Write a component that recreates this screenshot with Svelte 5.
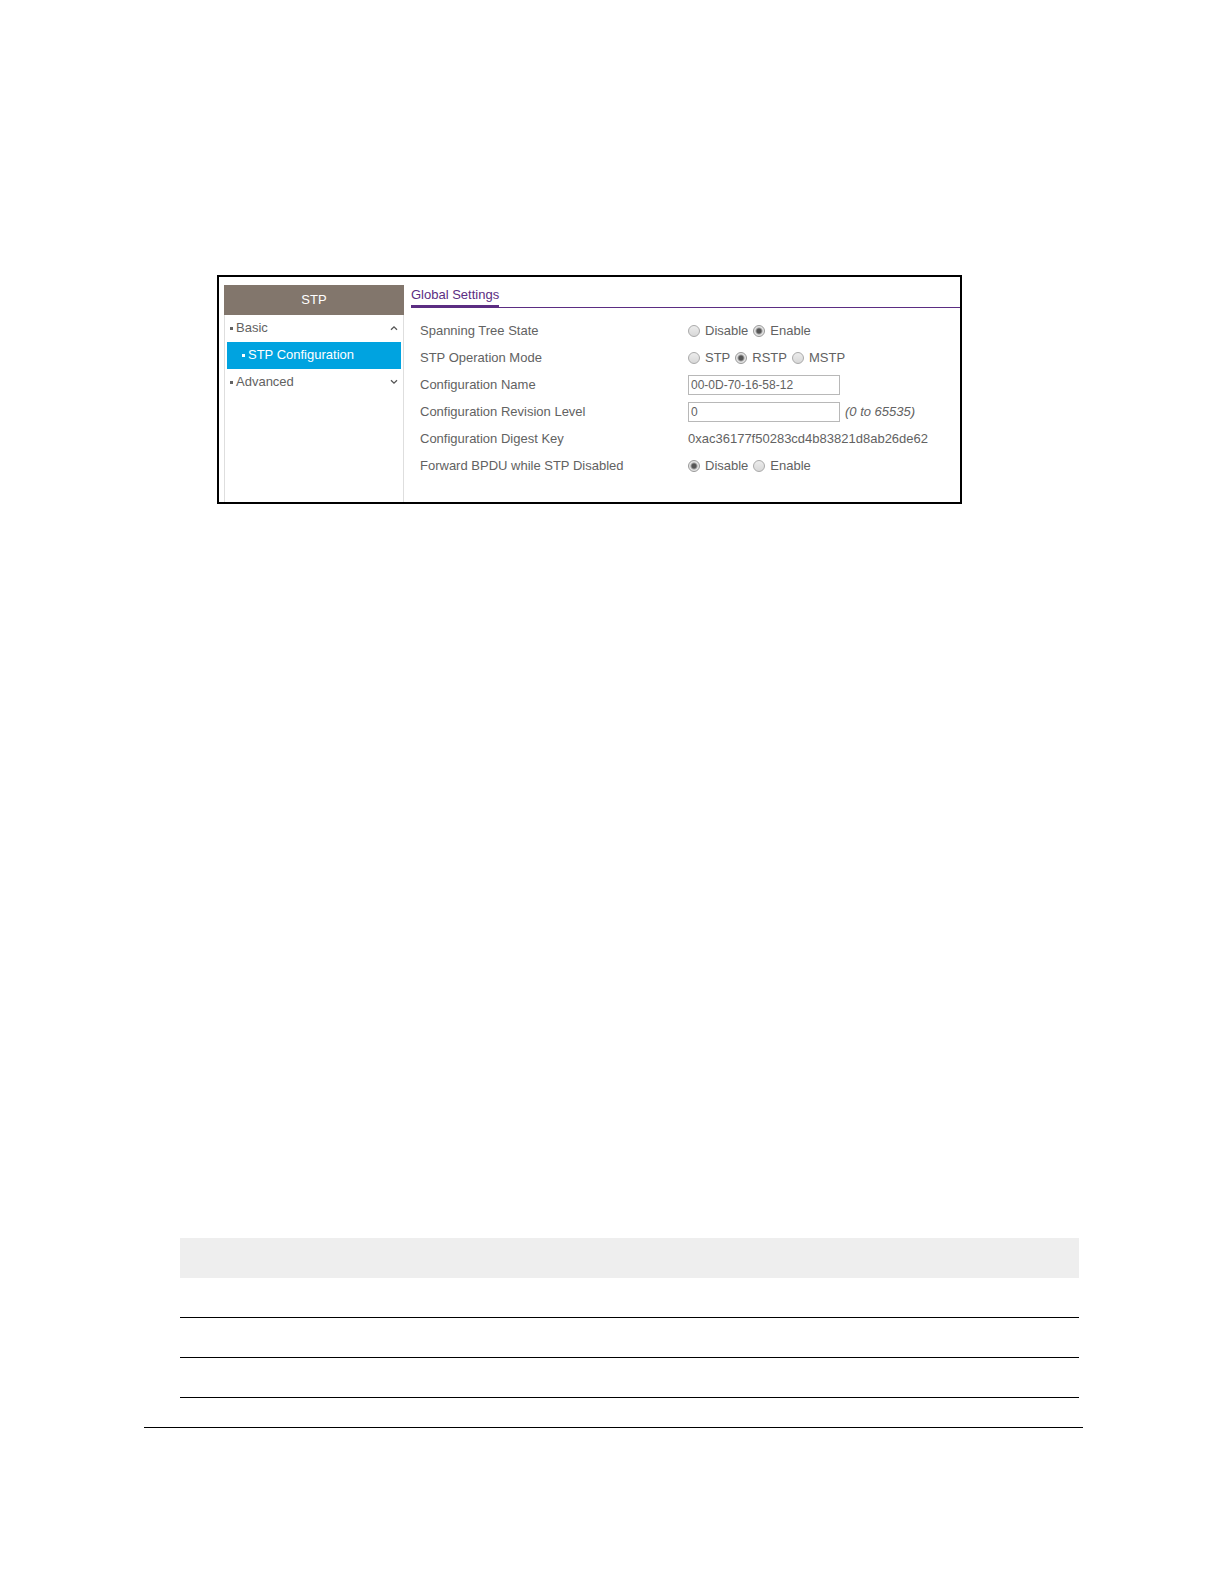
<script lang="ts">
  interface MenuGroup {
    label: string;
    open: boolean;
    links: string[];
  }

  interface Row {
    id: string;
    label: string;
    type: 'radio' | 'text' | 'static';
    value: string;
    options?: string[];
    hint?: string;
  }

  let menu: MenuGroup[] = [
    {label: 'Basic', open: true, links: ['STP Configuration']},
    {label: 'Advanced', open: false, links: []}
  ];

  let rows: Row[] = [
    {id: 'state', label: 'Spanning Tree State', type: 'radio', value: 'Enable', options: ['Disable', 'Enable']},
    {id: 'mode', label: 'STP Operation Mode', type: 'radio', value: 'RSTP', options: ['STP', 'RSTP', 'MSTP']},
    {id: 'name', label: 'Configuration Name', type: 'text', value: '00-0D-70-16-58-12'},
    {id: 'revision', label: 'Configuration Revision Level', type: 'text', value: '0', hint: '(0 to 65535)'},
    {id: 'digest', label: 'Configuration Digest Key', type: 'static', value: '0xac36177f50283cd4b83821d8ab26de62'},
    {id: 'bpdu', label: 'Forward BPDU while STP Disabled', type: 'radio', value: 'Disable', options: ['Disable', 'Enable']}
  ];

  function toggle(index: number) {
    menu[index].open = !menu[index].open
  }
</script>

<main class="page">
  <section class="panel">
    <nav class="menu">
      <h2 class="menu__title">STP</h2>
      {#each menu as group, index}
        <button type="button" class="menu__group" aria-expanded={group.open} on:click={() => toggle(index)}>
          <span class="menu__bullet"></span>
          {group.label}
          <svg class="menu__arrow" width="8" height="6" viewBox="0 0 8 6" aria-hidden="true">
            <path d={group.open ? 'M1 4.8L4 1.8L7 4.8' : 'M1 1.2L4 4.2L7 1.2'} />
          </svg>
        </button>
        {#if group.open}
          {#each group.links as link}
            <a class="menu__link" href="#settings">
              <span class="menu__bullet"></span>
              {link}
            </a>
          {/each}
        {/if}
      {/each}
    </nav>

    <form class="settings" id="settings">
      <div class="settings__header">
        <h1 class="settings__title">Global Settings</h1>
      </div>
      <div class="settings__rows">
        {#each rows as row}
          <div class="row">
            {#if row.type === 'text'}
              <label class="row__label" for={row.id}>{row.label}</label>
              <div class="row__value">
                <input class="row__input" id={row.id} type="text" bind:value={row.value}>
                {#if row.hint}
                  <em class="row__hint">{row.hint}</em>
                {/if}
              </div>
            {:else if row.type === 'radio'}
              <span class="row__label" id="{row.id}-label">{row.label}</span>
              <div class="row__value" role="radiogroup" aria-labelledby="{row.id}-label">
                {#each row.options ?? [] as option}
                  <label class="radio">
                    <input class="radio__input" type="radio" name={row.id} value={option} bind:group={row.value}>
                    {option}
                  </label>
                {/each}
              </div>
            {:else}
              <span class="row__label">{row.label}</span>
              <span class="row__value">{row.value}</span>
            {/if}
          </div>
        {/each}
      </div>
    </form>
  </section>

  <table class="grid">
    <thead>
      <tr><td></td></tr>
    </thead>
    <tbody>
      {#each Array(3) as _}
        <tr><td></td></tr>
      {/each}
    </tbody>
  </table>

  <hr class="rule">
</main>

<style>
  :global(body) {
    background: #fff;
  }

  .page {
    box-sizing: border-box;
    min-height: 100vh;
    padding: 275px 141px 156px 144px;
    font-family: "Liberation Sans", Arial, sans-serif;
    font-size: 13px;
    line-height: 16px;
    color: #626262;
  }

  .panel {
    box-sizing: border-box;
    display: flex;
    max-width: 745px;
    min-height: 229px;
    margin-left: 73px;
    padding: 8px 0 0 5px;
    border: 2px solid #000;
  }

  .menu {
    box-sizing: border-box;
    flex: 0 0 180px;
    border: 1px solid #dedede;
    border-width: 0 1px;
  }

  .menu__title {
    margin: 0 -1px;
    background: #82766c;
    color: #fff;
    font-size: 13px;
    font-weight: normal;
    line-height: 30px;
    text-align: center;
  }

  .menu__group,
  .menu__link {
    display: flex;
    align-items: center;
    box-sizing: border-box;
    height: 27px;
    gap: 3px;
    font: inherit;
  }

  .menu__group {
    width: 100%;
    padding: 0 5px 1px;
    border: none;
    background: none;
    color: inherit;
    cursor: pointer;
  }

  .menu__link {
    margin: 0 2px;
    padding: 0 0 1px 15px;
    background: #00a3e0;
    color: #fff;
    text-decoration: none;
  }

  .menu__bullet {
    width: 3px;
    height: 3px;
    background: currentColor;
  }

  .menu__arrow {
    margin-left: auto;
    fill: none;
    stroke: #555;
    stroke-width: 1.3;
  }

  .settings {
    flex: 1;
    padding-left: 7px;
  }

  .settings__header {
    display: flex;
    height: 23px;
    box-sizing: border-box;
    border-bottom: 1px solid #5b2d82;
  }

  .settings__title {
    box-sizing: border-box;
    height: 23px;
    margin: 0;
    padding-top: 2px;
    border-bottom: 3px solid #5b2d82;
    color: #5b2d82;
    font-size: 13px;
    font-weight: normal;
  }

  .settings__rows {
    padding: 9px 0 0 9px;
  }

  .row {
    display: flex;
    align-items: center;
    height: 27px;
  }

  .row__label {
    flex: 0 0 268px;
  }

  .row__value {
    display: flex;
    align-items: center;
    gap: 5px;
  }

  .row__input {
    box-sizing: border-box;
    width: 152px;
    height: 20px;
    padding: 0 2px;
    border: 1px solid #b8b8b8;
    background: #fff;
    color: inherit;
    font: inherit;
    font-size: 12px;
  }

  .radio {
    display: flex;
    align-items: center;
    gap: 5px;
  }

  .radio__input {
    appearance: none;
    box-sizing: border-box;
    width: 12px;
    height: 12px;
    margin: 0;
    border: 1px solid #aaa;
    border-radius: 50%;
    background: linear-gradient(#ececec, #d8d8d8);
  }

  .radio__input:checked {
    border-color: #999;
    background: radial-gradient(circle, #555 0 2px, #e4e4e4 4px);
  }

  .grid {
    width: calc(100% - 40px);
    margin: 734px 4px 0 36px;
    border-collapse: separate;
    border-spacing: 0;
  }

  .grid td {
    box-sizing: border-box;
    height: 40px;
    padding: 0;
    border-bottom: 1px solid #000;
  }

  .grid thead td {
    border: none;
    background: #eee;
  }

  .rule {
    margin: 29px 0 0;
    border: none;
    border-top: 1px solid #000;
  }
</style>
